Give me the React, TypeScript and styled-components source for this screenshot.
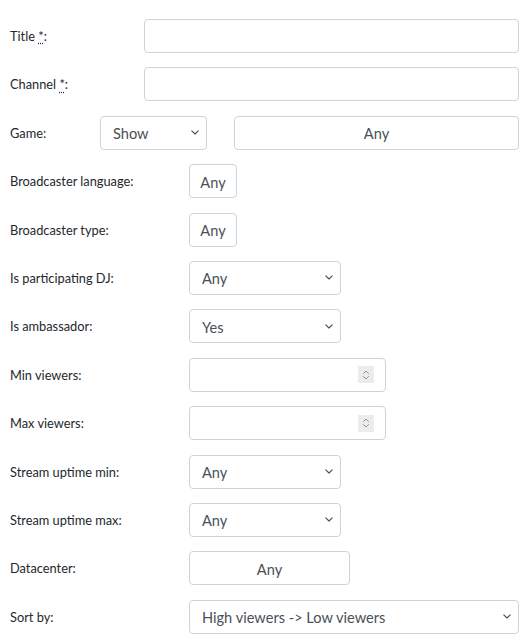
import React from 'react';
import styled, { createGlobalStyle } from 'styled-components';

const GlobalStyle = createGlobalStyle`
	body {
		margin: 0;
		background: #ffffff;
		font-family: Lato, 'Noto Sans', sans-serif;
		color: #212529;
	}
`;

const Form = styled.form`
	padding: 19px 9px 0 10px;
	width: 528px;
	box-sizing: border-box;
	display: flex;
	flex-direction: column;
	gap: 14.4px;
`;

const Row = styled.div`
	display: flex;
	align-items: center;
	height: 34px;
`;

const Label = styled.label<{ $width: number }>`
	flex: 0 0 ${(p) => p.$width}px;
	font-size: 12.8px;
	color: #24282c;
	abbr {
		text-decoration: underline dotted;
		text-underline-offset: 2px;
		cursor: help;
	}
`;

const fieldBase = `
	box-sizing: border-box;
	height: 34px;
	border: 1px solid #ced4da;
	border-radius: 4px;
	background: #ffffff;
	font-family: Lato, 'Noto Sans', sans-serif;
	font-size: 14.6px;
	color: #495057;
`;

const TextInput = styled.input<{ $width?: number }>`
	${fieldBase}
	flex: ${(p) => (p.$width ? `0 0 ${p.$width}px` : '1 1 auto')};
	padding: 0 12px;
	outline: none;
`;

const SelectBox = styled.div<{ $width?: number }>`
	${fieldBase}
	flex: ${(p) => (p.$width ? `0 0 ${p.$width}px` : '1 1 auto')};
	display: flex;
	align-items: center;
	justify-content: space-between;
	padding: 0 7px 0 12px;
	cursor: pointer;
	span {
		padding-top: 2px;
	}
`;

const PickButton = styled.button<{ $width?: number; $gap?: number }>`
	${fieldBase}
	flex: ${(p) => (p.$width ? `0 0 ${p.$width}px` : '1 1 auto')};
	margin-left: ${(p) => p.$gap ?? 0}px;
	padding: 2px 0 0;
	text-align: center;
	cursor: pointer;
`;

const NumberBox = styled.div<{ $width: number }>`
	${fieldBase}
	flex: 0 0 ${(p) => p.$width}px;
	display: flex;
	align-items: center;
	justify-content: flex-end;
	padding-right: 11px;
`;

const Spinner = styled.span`
	width: 16px;
	height: 17px;
	background: #ececef;
	display: flex;
	align-items: center;
	justify-content: center;
`;

const Chevron = () => (
	<svg width="8" height="5" viewBox="0 0 8 5" fill="none">
		<path d="M0.8 0.8L4 4l3.2-3.2" stroke="#494d52" strokeWidth="1.1" strokeLinecap="round" strokeLinejoin="round" />
	</svg>
);

const SpinIcon = () => (
	<svg width="8" height="12" viewBox="0 0 8 12" fill="none">
		<path d="M1.5 4.5L4 2l2.5 2.5M1.5 7.5L4 10l2.5-2.5" stroke="#8a8a90" strokeWidth="0.9" strokeLinecap="round" strokeLinejoin="round" />
	</svg>
);

type SelectProps = { value: string; width?: number };

const Select = ({ value, width }: SelectProps) => (
	<SelectBox $width={width}>
		<span>{value}</span>
		<Chevron />
	</SelectBox>
);

const NumberField = () => (
	<NumberBox $width={197}>
		<Spinner>
			<SpinIcon />
		</Spinner>
	</NumberBox>
);

const App: React.FunctionComponent = () => {
	return (
		<>
			<GlobalStyle />
			<Form>
				<Row>
					<Label $width={134}>
						Title <abbr title="required">*</abbr>:
					</Label>
					<TextInput type="text" />
				</Row>
				<Row>
					<Label $width={134}>
						Channel <abbr title="required">*</abbr>:
					</Label>
					<TextInput type="text" />
				</Row>
				<Row>
					<Label $width={90}>Game:</Label>
					<Select value="Show" width={107} />
					<PickButton type="button" $gap={27}>
						Any
					</PickButton>
				</Row>
				<Row>
					<Label $width={179}>Broadcaster language:</Label>
					<PickButton type="button" $width={48}>
						Any
					</PickButton>
				</Row>
				<Row>
					<Label $width={179}>Broadcaster type:</Label>
					<PickButton type="button" $width={48}>
						Any
					</PickButton>
				</Row>
				<Row>
					<Label $width={179}>Is participating DJ:</Label>
					<Select value="Any" width={152} />
				</Row>
				<Row>
					<Label $width={179}>Is ambassador:</Label>
					<Select value="Yes" width={152} />
				</Row>
				<Row>
					<Label $width={179}>Min viewers:</Label>
					<NumberField />
				</Row>
				<Row>
					<Label $width={179}>Max viewers:</Label>
					<NumberField />
				</Row>
				<Row>
					<Label $width={179}>Stream uptime min:</Label>
					<Select value="Any" width={152} />
				</Row>
				<Row>
					<Label $width={179}>Stream uptime max:</Label>
					<Select value="Any" width={152} />
				</Row>
				<Row>
					<Label $width={179}>Datacenter:</Label>
					<PickButton type="button" $width={161}>
						Any
					</PickButton>
				</Row>
				<Row>
					<Label $width={179}>Sort by:</Label>
					<Select value="High viewers -> Low viewers" />
				</Row>
			</Form>
		</>
	);
};

export default App;
